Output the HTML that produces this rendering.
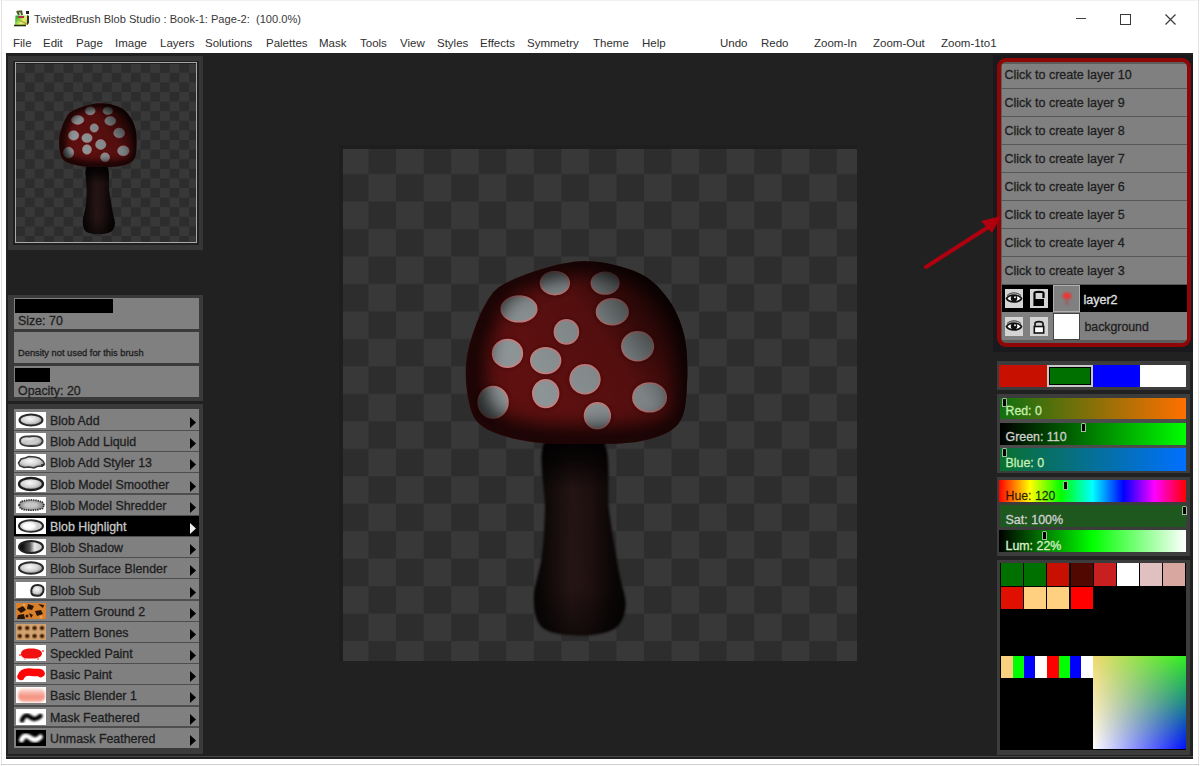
<!DOCTYPE html><html><head><meta charset="utf-8"><style>
html,body{margin:0;padding:0;}
body{width:1200px;height:766px;position:relative;overflow:hidden;background:#fff;font-family:"Liberation Sans",sans-serif;}
div,svg{position:absolute;}
</style></head><body>
<div style="left:1px;top:0px;width:1px;height:766px;background:#e2e2e2;"></div>
<div style="left:1198px;top:0px;width:1px;height:766px;background:#e2e2e2;"></div>
<div style="left:1px;top:764px;width:1198px;height:1px;background:#cfcfcf;"></div>
<svg style="left:10px;top:6px" width="24" height="24" viewBox="0 0 24 24">
<defs><linearGradient id="ti" x1="0" y1="0.3" x2="1" y2="0.9"><stop offset="0" stop-color="#20b020"/><stop offset="0.55" stop-color="#e8f070"/><stop offset="1" stop-color="#c8c040"/></linearGradient>
<filter color-interpolation-filters="sRGB" id="tib"><feGaussianBlur stdDeviation="0.55"/></filter></defs>
<g filter="url(#tib)">
<path d="M7 5 L9 9 M11 4.5 L12 9 M8.5 5.5 L12 5.5" stroke="#4a5a20" stroke-width="2"/>
<path d="M16 5 L19 5 L19 8 L16 8Z" fill="#222"/>
<path d="M5.5 9.5 L17 9.5 L18 19 L5 19Z" fill="url(#ti)"/>
<path d="M8 10 L14 10 L14 12 L8 12Z" fill="#b03050"/>
<path d="M17 9 L19 10 L19 17 L17 19Z" fill="#303828"/>
<path d="M4 19.5 L16 19.5" stroke="#1e3010" stroke-width="1.6"/>
<path d="M9 14 L17 18" stroke="#a0a040" stroke-width="1.2"/>
</g></svg>
<div style="left:34px;top:13.70px;font-size:11.1px;line-height:11.1px;color:#383838;white-space:nowrap;">TwistedBrush Blob Studio : Book-1: Page-2:&nbsp; (100.0%)</div>
<div style="left:1076px;top:18.2px;width:9.5px;height:1.2px;background:#444;"></div>
<div style="left:1120px;top:14px;width:8.5px;height:8.5px;background:transparent;border:1.2px solid #3a3a3a;"></div>
<svg style="left:1165px;top:13.5px" width="11" height="11" viewBox="0 0 11 11"><path d="M0.5 0.5L10.5 10.5M10.5 0.5L0.5 10.5" stroke="#3a3a3a" stroke-width="1.2"/></svg>
<div style="left:13px;top:37.87px;font-size:11.5px;line-height:11.5px;color:#303030;white-space:nowrap;">File</div>
<div style="left:43px;top:37.87px;font-size:11.5px;line-height:11.5px;color:#303030;white-space:nowrap;">Edit</div>
<div style="left:76px;top:37.87px;font-size:11.5px;line-height:11.5px;color:#303030;white-space:nowrap;">Page</div>
<div style="left:115px;top:37.87px;font-size:11.5px;line-height:11.5px;color:#303030;white-space:nowrap;">Image</div>
<div style="left:160px;top:37.87px;font-size:11.5px;line-height:11.5px;color:#303030;white-space:nowrap;">Layers</div>
<div style="left:205px;top:37.87px;font-size:11.5px;line-height:11.5px;color:#303030;white-space:nowrap;">Solutions</div>
<div style="left:266px;top:37.87px;font-size:11.5px;line-height:11.5px;color:#303030;white-space:nowrap;">Palettes</div>
<div style="left:319px;top:37.87px;font-size:11.5px;line-height:11.5px;color:#303030;white-space:nowrap;">Mask</div>
<div style="left:360px;top:37.87px;font-size:11.5px;line-height:11.5px;color:#303030;white-space:nowrap;">Tools</div>
<div style="left:400px;top:37.87px;font-size:11.5px;line-height:11.5px;color:#303030;white-space:nowrap;">View</div>
<div style="left:437px;top:37.87px;font-size:11.5px;line-height:11.5px;color:#303030;white-space:nowrap;">Styles</div>
<div style="left:480px;top:37.87px;font-size:11.5px;line-height:11.5px;color:#303030;white-space:nowrap;">Effects</div>
<div style="left:527px;top:37.87px;font-size:11.5px;line-height:11.5px;color:#303030;white-space:nowrap;">Symmetry</div>
<div style="left:593px;top:37.87px;font-size:11.5px;line-height:11.5px;color:#303030;white-space:nowrap;">Theme</div>
<div style="left:642px;top:37.87px;font-size:11.5px;line-height:11.5px;color:#303030;white-space:nowrap;">Help</div>
<div style="left:720px;top:37.87px;font-size:11.5px;line-height:11.5px;color:#303030;white-space:nowrap;">Undo</div>
<div style="left:761px;top:37.87px;font-size:11.5px;line-height:11.5px;color:#303030;white-space:nowrap;">Redo</div>
<div style="left:814px;top:37.87px;font-size:11.5px;line-height:11.5px;color:#303030;white-space:nowrap;">Zoom-In</div>
<div style="left:873px;top:37.87px;font-size:11.5px;line-height:11.5px;color:#303030;white-space:nowrap;">Zoom-Out</div>
<div style="left:941px;top:37.87px;font-size:11.5px;line-height:11.5px;color:#303030;white-space:nowrap;">Zoom-1to1</div>
<div style="left:6px;top:53px;width:1187px;height:706px;background:#212121;"></div>
<div style="left:6px;top:756px;width:1187px;height:1.2px;background:#474747;"></div>
<div style="left:0px;top:0px;width:1200px;height:1px;background:#f0f0f0;"></div>
<div style="left:8px;top:56px;width:195px;height:194px;background:#363636;"></div>
<div style="left:13px;top:61px;width:186px;height:184px;background:#202020;"></div>
<svg style="left:16px;top:63.5px" width="180" height="179" viewBox="0 0 514 512" preserveAspectRatio="none"><defs>
<pattern id="tchk" x="-2.05" y="-2.37" width="55.1" height="54.94" patternUnits="userSpaceOnUse">
<rect width="55.1" height="54.94" fill="#2d2d2d"/><rect width="27.55" height="27.47" fill="#383838"/><rect x="27.55" y="27.47" width="27.55" height="27.47" fill="#383838"/>
</pattern>
<radialGradient id="tshade" gradientUnits="userSpaceOnUse" cx="0" cy="0" r="1" gradientTransform="translate(535 362) scale(168 118)"><stop offset="0.00" stop-color="#000" stop-opacity="0.000"/><stop offset="0.05" stop-color="#000" stop-opacity="0.000"/><stop offset="0.10" stop-color="#000" stop-opacity="0.000"/><stop offset="0.15" stop-color="#000" stop-opacity="0.000"/><stop offset="0.20" stop-color="#000" stop-opacity="0.000"/><stop offset="0.25" stop-color="#000" stop-opacity="0.000"/><stop offset="0.30" stop-color="#000" stop-opacity="0.000"/><stop offset="0.35" stop-color="#000" stop-opacity="0.020"/><stop offset="0.40" stop-color="#000" stop-opacity="0.057"/><stop offset="0.45" stop-color="#000" stop-opacity="0.104"/><stop offset="0.50" stop-color="#000" stop-opacity="0.160"/><stop offset="0.55" stop-color="#000" stop-opacity="0.224"/><stop offset="0.60" stop-color="#000" stop-opacity="0.295"/><stop offset="0.65" stop-color="#000" stop-opacity="0.371"/><stop offset="0.70" stop-color="#000" stop-opacity="0.454"/><stop offset="0.75" stop-color="#000" stop-opacity="0.541"/><stop offset="0.80" stop-color="#000" stop-opacity="0.634"/><stop offset="0.85" stop-color="#000" stop-opacity="0.731"/><stop offset="0.90" stop-color="#000" stop-opacity="0.833"/><stop offset="0.95" stop-color="#000" stop-opacity="0.940"/><stop offset="1.00" stop-color="#000" stop-opacity="0.970"/></radialGradient>
<linearGradient id="tstem" gradientUnits="userSpaceOnUse" x1="533" y1="0" x2="625" y2="0"><stop offset="0" stop-color="#050303"/><stop offset="0.15" stop-color="#120a0a"/><stop offset="0.42" stop-color="#2a1717"/><stop offset="0.6" stop-color="#241313"/><stop offset="0.85" stop-color="#0e0707"/><stop offset="1" stop-color="#050303"/></linearGradient>
<linearGradient id="tstemv" gradientUnits="userSpaceOnUse" x1="0" y1="440" x2="0" y2="636"><stop offset="0" stop-color="#000" stop-opacity="0.95"/><stop offset="0.1" stop-color="#000" stop-opacity="0.75"/><stop offset="0.25" stop-color="#000" stop-opacity="0.15"/><stop offset="0.75" stop-color="#000" stop-opacity="0.1"/><stop offset="1" stop-color="#000" stop-opacity="0.55"/></linearGradient>
<clipPath id="tcapclip"><path d="M577.9 261.5 C598.5 260.1 620.5 265.6 635.3 271.6 C650.1 277.6 658.8 286.9 666.9 297.4 C675.0 307.9 680.6 320.4 684.0 334.8 C687.4 349.2 687.9 368.8 687.0 383.6 C686.1 398.4 686.1 414.2 678.4 423.8 C670.7 433.4 656.8 437.6 641.0 441.0 C625.2 444.4 602.8 443.9 583.6 443.9 C564.4 443.9 542.8 443.9 526.0 441.0 C509.2 438.1 492.6 433.4 483.0 426.7 C473.4 420.0 471.3 412.8 468.7 400.8 C466.1 388.8 464.4 371.2 467.3 354.9 C470.2 338.6 478.6 315.6 486.0 303.2 C493.4 290.8 496.5 287.1 511.8 280.2 C527.1 273.2 557.3 262.9 577.9 261.5Z"/></clipPath>
<filter color-interpolation-filters="sRGB" id="tblur" x="-10%" y="-10%" width="120%" height="120%"><feGaussianBlur stdDeviation="0.7"/></filter>
<filter color-interpolation-filters="sRGB" id="tedge" x="-20%" y="-20%" width="140%" height="140%"><feGaussianBlur stdDeviation="9"/></filter>
<linearGradient id="tdir" gradientUnits="userSpaceOnUse" x1="545" y1="395" x2="690" y2="290"><stop offset="0" stop-color="#000" stop-opacity="0"/><stop offset="0.45" stop-color="#000" stop-opacity="0.12"/><stop offset="0.75" stop-color="#000" stop-opacity="0.6"/><stop offset="1" stop-color="#000" stop-opacity="0.92"/></linearGradient>
<filter color-interpolation-filters="sRGB" id="tblur2" x="-10%" y="-10%" width="120%" height="120%"><feGaussianBlur stdDeviation="1.2"/></filter>
</defs><rect x="0" y="0" width="514" height="512" fill="url(#tchk)"/><g transform="translate(-343,-149)"><g filter="url(#tblur2)"><path d="M546.0 440.0 C536.5 451.7 545.7 490.7 545.0 510.0 C544.3 529.3 543.8 541.3 542.0 556.0 C540.2 570.7 533.8 586.0 534.0 598.0 C534.2 610.0 535.5 621.8 543.0 628.0 C550.5 634.2 567.2 635.3 579.0 635.5 C590.8 635.7 606.2 633.9 614.0 629.0 C621.8 624.1 624.7 615.5 625.5 606.0 C626.3 596.5 621.8 588.0 619.0 572.0 C616.2 556.0 611.8 532.0 609.0 510.0 C606.2 488.0 612.5 451.7 602.0 440.0 C591.5 428.3 555.5 428.3 546.0 440.0Z" fill="url(#tstem)"/><path d="M546.0 440.0 C536.5 451.7 545.7 490.7 545.0 510.0 C544.3 529.3 543.8 541.3 542.0 556.0 C540.2 570.7 533.8 586.0 534.0 598.0 C534.2 610.0 535.5 621.8 543.0 628.0 C550.5 634.2 567.2 635.3 579.0 635.5 C590.8 635.7 606.2 633.9 614.0 629.0 C621.8 624.1 624.7 615.5 625.5 606.0 C626.3 596.5 621.8 588.0 619.0 572.0 C616.2 556.0 611.8 532.0 609.0 510.0 C606.2 488.0 612.5 451.7 602.0 440.0 C591.5 428.3 555.5 428.3 546.0 440.0Z" fill="url(#tstemv)"/></g><g filter="url(#tblur)"><path d="M577.9 261.5 C598.5 260.1 620.5 265.6 635.3 271.6 C650.1 277.6 658.8 286.9 666.9 297.4 C675.0 307.9 680.6 320.4 684.0 334.8 C687.4 349.2 687.9 368.8 687.0 383.6 C686.1 398.4 686.1 414.2 678.4 423.8 C670.7 433.4 656.8 437.6 641.0 441.0 C625.2 444.4 602.8 443.9 583.6 443.9 C564.4 443.9 542.8 443.9 526.0 441.0 C509.2 438.1 492.6 433.4 483.0 426.7 C473.4 420.0 471.3 412.8 468.7 400.8 C466.1 388.8 464.4 371.2 467.3 354.9 C470.2 338.6 478.6 315.6 486.0 303.2 C493.4 290.8 496.5 287.1 511.8 280.2 C527.1 273.2 557.3 262.9 577.9 261.5Z" fill="#5e1010"/><g clip-path="url(#tcapclip)"><ellipse cx="554.9" cy="283.1" rx="16.9" ry="14.0" fill="#4a0a0a" opacity="0.6" filter="url(#tblur2)"/><ellipse cx="605.1" cy="283.1" rx="16.3" ry="13.4" fill="#4a0a0a" opacity="0.6" filter="url(#tblur2)"/><ellipse cx="519" cy="308.9" rx="20.3" ry="15.4" fill="#4a0a0a" opacity="0.6" filter="url(#tblur2)"/><ellipse cx="612.3" cy="311.8" rx="18.3" ry="15.4" fill="#4a0a0a" opacity="0.6" filter="url(#tblur2)"/><ellipse cx="566.4" cy="331.9" rx="14.5" ry="14.5" fill="#4a0a0a" opacity="0.6" filter="url(#tblur2)"/><ellipse cx="637.6" cy="346.3" rx="18.3" ry="16.9" fill="#4a0a0a" opacity="0.6" filter="url(#tblur2)"/><ellipse cx="507.5" cy="353.4" rx="17.4" ry="16.3" fill="#4a0a0a" opacity="0.6" filter="url(#tblur2)"/><ellipse cx="545.7" cy="360.6" rx="17.4" ry="15.4" fill="#4a0a0a" opacity="0.6" filter="url(#tblur2)"/><ellipse cx="585" cy="379.3" rx="17.4" ry="16.9" fill="#4a0a0a" opacity="0.6" filter="url(#tblur2)"/><ellipse cx="545.7" cy="393.6" rx="15.4" ry="16.3" fill="#4a0a0a" opacity="0.6" filter="url(#tblur2)"/><ellipse cx="493.1" cy="402.3" rx="17.4" ry="18.3" fill="#4a0a0a" opacity="0.6" filter="url(#tblur2)"/><ellipse cx="649.6" cy="397.4" rx="19.2" ry="16.9" fill="#4a0a0a" opacity="0.6" filter="url(#tblur2)"/><ellipse cx="597.4" cy="415.8" rx="15.4" ry="15.4" fill="#4a0a0a" opacity="0.6" filter="url(#tblur2)"/><ellipse cx="554.9" cy="283.1" rx="14.4" ry="11.5" fill="#8d9496" stroke="#c98080" stroke-width="1.6"/><ellipse cx="605.1" cy="283.1" rx="13.8" ry="10.9" fill="#8d9496" stroke="#c98080" stroke-width="1.6"/><ellipse cx="519" cy="308.9" rx="17.8" ry="12.9" fill="#8d9496" stroke="#c98080" stroke-width="1.6"/><ellipse cx="612.3" cy="311.8" rx="15.8" ry="12.9" fill="#8d9496" stroke="#c98080" stroke-width="1.6"/><ellipse cx="566.4" cy="331.9" rx="12" ry="12" fill="#8d9496" stroke="#c98080" stroke-width="1.6"/><ellipse cx="637.6" cy="346.3" rx="15.8" ry="14.4" fill="#8d9496" stroke="#c98080" stroke-width="1.6"/><ellipse cx="507.5" cy="353.4" rx="14.9" ry="13.8" fill="#8d9496" stroke="#c98080" stroke-width="1.6"/><ellipse cx="545.7" cy="360.6" rx="14.9" ry="12.9" fill="#8d9496" stroke="#c98080" stroke-width="1.6"/><ellipse cx="585" cy="379.3" rx="14.9" ry="14.4" fill="#8d9496" stroke="#c98080" stroke-width="1.6"/><ellipse cx="545.7" cy="393.6" rx="12.9" ry="13.8" fill="#8d9496" stroke="#c98080" stroke-width="1.6"/><ellipse cx="493.1" cy="402.3" rx="14.9" ry="15.8" fill="#8d9496" stroke="#c98080" stroke-width="1.6"/><ellipse cx="649.6" cy="397.4" rx="16.7" ry="14.4" fill="#8d9496" stroke="#c98080" stroke-width="1.6"/><ellipse cx="597.4" cy="415.8" rx="12.9" ry="12.9" fill="#8d9496" stroke="#c98080" stroke-width="1.6"/><path d="M577.9 261.5 C598.5 260.1 620.5 265.6 635.3 271.6 C650.1 277.6 658.8 286.9 666.9 297.4 C675.0 307.9 680.6 320.4 684.0 334.8 C687.4 349.2 687.9 368.8 687.0 383.6 C686.1 398.4 686.1 414.2 678.4 423.8 C670.7 433.4 656.8 437.6 641.0 441.0 C625.2 444.4 602.8 443.9 583.6 443.9 C564.4 443.9 542.8 443.9 526.0 441.0 C509.2 438.1 492.6 433.4 483.0 426.7 C473.4 420.0 471.3 412.8 468.7 400.8 C466.1 388.8 464.4 371.2 467.3 354.9 C470.2 338.6 478.6 315.6 486.0 303.2 C493.4 290.8 496.5 287.1 511.8 280.2 C527.1 273.2 557.3 262.9 577.9 261.5Z" fill="none" stroke="#000" stroke-width="30" opacity="0.75" filter="url(#tedge)" transform="translate(5 -3)"/><rect x="440" y="240" width="280" height="230" fill="url(#tdir)"/></g></g></g></svg>
<div style="left:14.5px;top:62px;width:180.25px;height:178.75px;background:transparent;border:1.5px solid #a8a8a8;"></div>
<div style="left:8px;top:295px;width:195px;height:106px;background:#3a3a3a;"></div>
<div style="left:14px;top:298px;width:185px;height:31px;background:#808080;"></div>
<div style="left:15px;top:299px;width:98px;height:14px;background:#000;"></div>
<div style="left:18px;top:315.30px;font-size:12.4px;line-height:12.4px;color:#1e1e1e;white-space:nowrap;-webkit-text-stroke:0.3px currentColor;">Size: 70</div>
<div style="left:14px;top:332px;width:185px;height:31px;background:#808080;"></div>
<div style="left:18px;top:348.93px;font-size:9.3px;line-height:9.3px;color:#1e1e1e;white-space:nowrap;-webkit-text-stroke:0.3px currentColor;">Density not used for this brush</div>
<div style="left:14px;top:366px;width:185px;height:31px;background:#808080;"></div>
<div style="left:15px;top:368px;width:35px;height:14px;background:#000;"></div>
<div style="left:18px;top:384.60px;font-size:12.4px;line-height:12.4px;color:#1e1e1e;white-space:nowrap;-webkit-text-stroke:0.3px currentColor;">Opacity: 20</div>
<div style="left:8px;top:404px;width:195px;height:350px;background:#3a3a3a;"></div>
<div style="left:14px;top:409px;width:185px;height:22px;background:#808080;"></div>
<div style="left:16px;top:412px;width:30px;height:16px;background:#fff;"></div>
<svg style="left:16px;top:412px" width="30" height="16" viewBox="0 0 30 16"><defs><radialGradient id="g0" cx="0.45" cy="0.4" r="0.6"><stop offset="0" stop-color="#fafafa"/><stop offset="0.6" stop-color="#d0d0d0"/><stop offset="1" stop-color="#8a8a8a"/></radialGradient><filter color-interpolation-filters="sRGB" id="f0" x="-20%" y="-30%" width="140%" height="160%"><feGaussianBlur stdDeviation="0.45"/></filter><filter color-interpolation-filters="sRGB" id="h0" x="-20%" y="-30%" width="140%" height="160%"><feGaussianBlur stdDeviation="1"/></filter></defs><ellipse cx="15" cy="8" rx="11.5" ry="5.6" fill="url(#g0)" stroke="#2a2a2a" stroke-width="2" filter="url(#f0)"/></svg>
<div style="left:50px;top:414.90px;font-size:12.4px;line-height:12.4px;color:#1e1e1e;white-space:nowrap;-webkit-text-stroke:0.3px currentColor;">Blob Add</div>
<svg style="left:190px;top:417px" width="6" height="11" viewBox="0 0 6 11"><path d="M0 0L6 5.5L0 11Z" fill="#000"/></svg>
<div style="left:14px;top:430px;width:185px;height:22px;background:#808080;"></div>
<div style="left:16px;top:433px;width:30px;height:16px;background:#fff;"></div>
<svg style="left:16px;top:433px" width="30" height="16" viewBox="0 0 30 16"><defs><radialGradient id="g1" cx="0.45" cy="0.4" r="0.6"><stop offset="0" stop-color="#fafafa"/><stop offset="0.6" stop-color="#d0d0d0"/><stop offset="1" stop-color="#8a8a8a"/></radialGradient><filter color-interpolation-filters="sRGB" id="f1" x="-20%" y="-30%" width="140%" height="160%"><feGaussianBlur stdDeviation="0.45"/></filter><filter color-interpolation-filters="sRGB" id="h1" x="-20%" y="-30%" width="140%" height="160%"><feGaussianBlur stdDeviation="1"/></filter></defs><path d="M4 8.5 C3.5 4.5 8 3 13 3.5 C18 2.5 25 3 26.5 7 C27.5 11 23 13.5 16 13 C9 13.5 4.5 12.5 4 8.5Z" fill="url(#g1)" stroke="#3a3a3a" stroke-width="1.8" filter="url(#f1)"/><path d="M8 10 C12 6 16 11 22 6" stroke="#b8b8b8" stroke-width="2" fill="none" filter="url(#h1)"/></svg>
<div style="left:50px;top:435.90px;font-size:12.4px;line-height:12.4px;color:#1e1e1e;white-space:nowrap;-webkit-text-stroke:0.3px currentColor;">Blob Add Liquid</div>
<svg style="left:190px;top:438px" width="6" height="11" viewBox="0 0 6 11"><path d="M0 0L6 5.5L0 11Z" fill="#000"/></svg>
<div style="left:14px;top:451px;width:185px;height:22px;background:#808080;"></div>
<div style="left:16px;top:454px;width:30px;height:16px;background:#fff;"></div>
<svg style="left:16px;top:454px" width="30" height="16" viewBox="0 0 30 16"><defs><radialGradient id="g2" cx="0.45" cy="0.4" r="0.6"><stop offset="0" stop-color="#fafafa"/><stop offset="0.6" stop-color="#d0d0d0"/><stop offset="1" stop-color="#8a8a8a"/></radialGradient><filter color-interpolation-filters="sRGB" id="f2" x="-20%" y="-30%" width="140%" height="160%"><feGaussianBlur stdDeviation="0.45"/></filter><filter color-interpolation-filters="sRGB" id="h2" x="-20%" y="-30%" width="140%" height="160%"><feGaussianBlur stdDeviation="1"/></filter></defs><path d="M2.5 9 L5 5 L9 4 L13 2.5 L19 3 L23 4 L27 7 L28.5 10 L26 12 L21 12.5 L18 14 L13 13 L8 13.5 L4 12 Z" fill="url(#g2)" stroke="#3a3a3a" stroke-width="1.5" filter="url(#f2)"/><path d="M25 10 L29 11 L26 13Z" fill="#222"/></svg>
<div style="left:50px;top:456.90px;font-size:12.4px;line-height:12.4px;color:#1e1e1e;white-space:nowrap;-webkit-text-stroke:0.3px currentColor;">Blob Add Styler 13</div>
<svg style="left:190px;top:459px" width="6" height="11" viewBox="0 0 6 11"><path d="M0 0L6 5.5L0 11Z" fill="#000"/></svg>
<div style="left:14px;top:473px;width:185px;height:22px;background:#808080;"></div>
<div style="left:16px;top:476px;width:30px;height:16px;background:#fff;"></div>
<svg style="left:16px;top:476px" width="30" height="16" viewBox="0 0 30 16"><defs><radialGradient id="g3" cx="0.45" cy="0.4" r="0.6"><stop offset="0" stop-color="#fafafa"/><stop offset="0.6" stop-color="#d0d0d0"/><stop offset="1" stop-color="#8a8a8a"/></radialGradient><filter color-interpolation-filters="sRGB" id="f3" x="-20%" y="-30%" width="140%" height="160%"><feGaussianBlur stdDeviation="0.45"/></filter><filter color-interpolation-filters="sRGB" id="h3" x="-20%" y="-30%" width="140%" height="160%"><feGaussianBlur stdDeviation="1"/></filter></defs><ellipse cx="15" cy="8" rx="12" ry="6" fill="url(#g3)" stroke="#1e1e1e" stroke-width="2.3" filter="url(#f3)"/></svg>
<div style="left:50px;top:478.90px;font-size:12.4px;line-height:12.4px;color:#1e1e1e;white-space:nowrap;-webkit-text-stroke:0.3px currentColor;">Blob Model Smoother</div>
<svg style="left:190px;top:481px" width="6" height="11" viewBox="0 0 6 11"><path d="M0 0L6 5.5L0 11Z" fill="#000"/></svg>
<div style="left:14px;top:494px;width:185px;height:22px;background:#808080;"></div>
<div style="left:16px;top:497px;width:30px;height:16px;background:#fff;"></div>
<svg style="left:16px;top:497px" width="30" height="16" viewBox="0 0 30 16"><defs><radialGradient id="g4" cx="0.45" cy="0.4" r="0.6"><stop offset="0" stop-color="#fafafa"/><stop offset="0.6" stop-color="#d0d0d0"/><stop offset="1" stop-color="#8a8a8a"/></radialGradient><filter color-interpolation-filters="sRGB" id="f4" x="-20%" y="-30%" width="140%" height="160%"><feGaussianBlur stdDeviation="0.45"/></filter><filter color-interpolation-filters="sRGB" id="h4" x="-20%" y="-30%" width="140%" height="160%"><feGaussianBlur stdDeviation="1"/></filter></defs><path d="M3 8 L5 4.5 L10 3.5 L15 3 L21 3.5 L26 5 L28 8 L26.5 11.5 L21 12.8 L15 13.2 L9 12.8 L4.5 11.5Z" fill="#9a9a9a" stroke="#333" stroke-width="1.8" stroke-dasharray="1.5 0.8" filter="url(#f4)"/><ellipse cx="15" cy="8" rx="8" ry="3.5" fill="#c8c8c8" filter="url(#h4)"/></svg>
<div style="left:50px;top:499.90px;font-size:12.4px;line-height:12.4px;color:#1e1e1e;white-space:nowrap;-webkit-text-stroke:0.3px currentColor;">Blob Model Shredder</div>
<svg style="left:190px;top:502px" width="6" height="11" viewBox="0 0 6 11"><path d="M0 0L6 5.5L0 11Z" fill="#000"/></svg>
<div style="left:14px;top:515px;width:185px;height:22px;background:#000;"></div>
<div style="left:16px;top:518px;width:30px;height:16px;background:#fff;"></div>
<svg style="left:16px;top:518px" width="30" height="16" viewBox="0 0 30 16"><defs><radialGradient id="g5" cx="0.45" cy="0.4" r="0.6"><stop offset="0" stop-color="#fafafa"/><stop offset="0.6" stop-color="#d0d0d0"/><stop offset="1" stop-color="#8a8a8a"/></radialGradient><filter color-interpolation-filters="sRGB" id="f5" x="-20%" y="-30%" width="140%" height="160%"><feGaussianBlur stdDeviation="0.45"/></filter><filter color-interpolation-filters="sRGB" id="h5" x="-20%" y="-30%" width="140%" height="160%"><feGaussianBlur stdDeviation="1"/></filter></defs><ellipse cx="15" cy="8" rx="12" ry="5.8" fill="#cfcfcf" stroke="#262626" stroke-width="2" filter="url(#f5)"/><ellipse cx="13" cy="8" rx="7" ry="4" fill="#fff" filter="url(#h5)"/></svg>
<div style="left:50px;top:520.90px;font-size:12.4px;line-height:12.4px;color:#c8c8c8;white-space:nowrap;-webkit-text-stroke:0.3px currentColor;">Blob Highlight</div>
<svg style="left:190px;top:523px" width="6" height="11" viewBox="0 0 6 11"><path d="M0 0L6 5.5L0 11Z" fill="#eee"/></svg>
<div style="left:14px;top:536px;width:185px;height:22px;background:#808080;"></div>
<div style="left:16px;top:539px;width:30px;height:16px;background:#fff;"></div>
<svg style="left:16px;top:539px" width="30" height="16" viewBox="0 0 30 16"><defs><radialGradient id="g6" cx="0.45" cy="0.4" r="0.6"><stop offset="0" stop-color="#fafafa"/><stop offset="0.6" stop-color="#d0d0d0"/><stop offset="1" stop-color="#8a8a8a"/></radialGradient><filter color-interpolation-filters="sRGB" id="f6" x="-20%" y="-30%" width="140%" height="160%"><feGaussianBlur stdDeviation="0.45"/></filter><filter color-interpolation-filters="sRGB" id="h6" x="-20%" y="-30%" width="140%" height="160%"><feGaussianBlur stdDeviation="1"/></filter></defs><defs><linearGradient id="s6" x1="0" x2="1"><stop offset="0.15" stop-color="#111"/><stop offset="0.45" stop-color="#555"/><stop offset="0.65" stop-color="#e8e8e8"/><stop offset="1" stop-color="#bbb"/></linearGradient></defs><ellipse cx="15" cy="8" rx="12" ry="6" fill="url(#s6)" stroke="#222" stroke-width="2" filter="url(#f6)"/></svg>
<div style="left:50px;top:541.90px;font-size:12.4px;line-height:12.4px;color:#1e1e1e;white-space:nowrap;-webkit-text-stroke:0.3px currentColor;">Blob Shadow</div>
<svg style="left:190px;top:544px" width="6" height="11" viewBox="0 0 6 11"><path d="M0 0L6 5.5L0 11Z" fill="#000"/></svg>
<div style="left:14px;top:557px;width:185px;height:22px;background:#808080;"></div>
<div style="left:16px;top:560px;width:30px;height:16px;background:#fff;"></div>
<svg style="left:16px;top:560px" width="30" height="16" viewBox="0 0 30 16"><defs><radialGradient id="g7" cx="0.45" cy="0.4" r="0.6"><stop offset="0" stop-color="#fafafa"/><stop offset="0.6" stop-color="#d0d0d0"/><stop offset="1" stop-color="#8a8a8a"/></radialGradient><filter color-interpolation-filters="sRGB" id="f7" x="-20%" y="-30%" width="140%" height="160%"><feGaussianBlur stdDeviation="0.45"/></filter><filter color-interpolation-filters="sRGB" id="h7" x="-20%" y="-30%" width="140%" height="160%"><feGaussianBlur stdDeviation="1"/></filter></defs><ellipse cx="15" cy="8" rx="12" ry="5.8" fill="url(#g7)" stroke="#2a2a2a" stroke-width="2" filter="url(#f7)"/></svg>
<div style="left:50px;top:562.90px;font-size:12.4px;line-height:12.4px;color:#1e1e1e;white-space:nowrap;-webkit-text-stroke:0.3px currentColor;">Blob Surface Blender</div>
<svg style="left:190px;top:565px" width="6" height="11" viewBox="0 0 6 11"><path d="M0 0L6 5.5L0 11Z" fill="#000"/></svg>
<div style="left:14px;top:579px;width:185px;height:22px;background:#808080;"></div>
<div style="left:16px;top:582px;width:30px;height:16px;background:#fff;"></div>
<svg style="left:16px;top:582px" width="30" height="16" viewBox="0 0 30 16"><defs><radialGradient id="g8" cx="0.45" cy="0.4" r="0.6"><stop offset="0" stop-color="#fafafa"/><stop offset="0.6" stop-color="#d0d0d0"/><stop offset="1" stop-color="#8a8a8a"/></radialGradient><filter color-interpolation-filters="sRGB" id="f8" x="-20%" y="-30%" width="140%" height="160%"><feGaussianBlur stdDeviation="0.45"/></filter><filter color-interpolation-filters="sRGB" id="h8" x="-20%" y="-30%" width="140%" height="160%"><feGaussianBlur stdDeviation="1"/></filter></defs><path d="M17 4.5 C19 2.5 25 2.5 27 5 C28.5 8 27 12 24 13.5 C20 14 16 13.5 15.5 11 C15 8 15.5 6 17 4.5Z" fill="url(#g8)" stroke="#262626" stroke-width="2" filter="url(#f8)"/></svg>
<div style="left:50px;top:584.90px;font-size:12.4px;line-height:12.4px;color:#1e1e1e;white-space:nowrap;-webkit-text-stroke:0.3px currentColor;">Blob Sub</div>
<svg style="left:190px;top:587px" width="6" height="11" viewBox="0 0 6 11"><path d="M0 0L6 5.5L0 11Z" fill="#000"/></svg>
<div style="left:14px;top:600px;width:185px;height:22px;background:#808080;"></div>
<div style="left:16px;top:603px;width:30px;height:16px;background:#fff;"></div>
<svg style="left:16px;top:603px" width="30" height="16" viewBox="0 0 30 16"><rect width="30" height="16" fill="#d8802c"/><g fill="#281405"><path d="M1 6 L7 3 L10 7 L5 10Z"/><path d="M12 1 L18 3 L16 7 L11 6Z"/><path d="M19 8 L25 7 L27 11 L21 13Z"/><path d="M2 12 L8 11 L9 16 L1 16Z"/><path d="M13 10 L17 12 L15 15Z"/><path d="M22 1 L28 2 L27 5Z"/><circle cx="11" cy="13" r="1.5"/></g><g fill="#f0a050"><circle cx="8" cy="2" r="1.5"/><circle cx="25" cy="14" r="1.5"/></g></svg>
<div style="left:50px;top:605.90px;font-size:12.4px;line-height:12.4px;color:#1e1e1e;white-space:nowrap;-webkit-text-stroke:0.3px currentColor;">Pattern Ground 2</div>
<svg style="left:190px;top:608px" width="6" height="11" viewBox="0 0 6 11"><path d="M0 0L6 5.5L0 11Z" fill="#000"/></svg>
<div style="left:14px;top:621px;width:185px;height:22px;background:#808080;"></div>
<div style="left:16px;top:624px;width:30px;height:16px;background:#fff;"></div>
<svg style="left:16px;top:624px" width="30" height="16" viewBox="0 0 30 16"><rect width="30" height="16" fill="#d0a070"/><circle cx="3.8" cy="4" r="2.6" fill="#8a5a2a"/><circle cx="3.8" cy="4" r="1.3" fill="#2a1808"/><circle cx="11.2" cy="4" r="2.6" fill="#8a5a2a"/><circle cx="11.2" cy="4" r="1.3" fill="#2a1808"/><circle cx="18.6" cy="4" r="2.6" fill="#8a5a2a"/><circle cx="18.6" cy="4" r="1.3" fill="#2a1808"/><circle cx="26.000000000000004" cy="4" r="2.6" fill="#8a5a2a"/><circle cx="26.000000000000004" cy="4" r="1.3" fill="#2a1808"/><circle cx="3.8" cy="12" r="2.6" fill="#8a5a2a"/><circle cx="3.8" cy="12" r="1.3" fill="#2a1808"/><circle cx="11.2" cy="12" r="2.6" fill="#8a5a2a"/><circle cx="11.2" cy="12" r="1.3" fill="#2a1808"/><circle cx="18.6" cy="12" r="2.6" fill="#8a5a2a"/><circle cx="18.6" cy="12" r="1.3" fill="#2a1808"/><circle cx="26.000000000000004" cy="12" r="2.6" fill="#8a5a2a"/><circle cx="26.000000000000004" cy="12" r="1.3" fill="#2a1808"/></svg>
<div style="left:50px;top:626.90px;font-size:12.4px;line-height:12.4px;color:#1e1e1e;white-space:nowrap;-webkit-text-stroke:0.3px currentColor;">Pattern Bones</div>
<svg style="left:190px;top:629px" width="6" height="11" viewBox="0 0 6 11"><path d="M0 0L6 5.5L0 11Z" fill="#000"/></svg>
<div style="left:14px;top:642px;width:185px;height:22px;background:#808080;"></div>
<div style="left:16px;top:645px;width:30px;height:16px;background:#fff;"></div>
<svg style="left:16px;top:645px" width="30" height="16" viewBox="0 0 30 16"><defs><filter color-interpolation-filters="sRGB" id="sp11" x="-30%" y="-50%" width="160%" height="200%"><feGaussianBlur stdDeviation="0.6"/></filter></defs><g filter="url(#sp11)"><path d="M5 9 C5 5 9 3.5 15 3.5 C21 3.5 26 5 26 8.5 C26 12 21 14 15 13.5 C9 14 5 12.5 5 9Z" fill="#f01010"/><circle cx="4" cy="10" r="1" fill="#f44"/><circle cx="27" cy="6" r="1" fill="#f44"/><circle cx="22" cy="14" r="0.9" fill="#f66"/><circle cx="9" cy="14" r="0.8" fill="#f66"/></g></svg>
<div style="left:50px;top:647.90px;font-size:12.4px;line-height:12.4px;color:#1e1e1e;white-space:nowrap;-webkit-text-stroke:0.3px currentColor;">Speckled Paint</div>
<svg style="left:190px;top:650px" width="6" height="11" viewBox="0 0 6 11"><path d="M0 0L6 5.5L0 11Z" fill="#000"/></svg>
<div style="left:14px;top:663px;width:185px;height:22px;background:#808080;"></div>
<div style="left:16px;top:666px;width:30px;height:16px;background:#fff;"></div>
<svg style="left:16px;top:666px" width="30" height="16" viewBox="0 0 30 16"><path d="M5 10.5 C7 5 13 5.5 18 6.5 C22 7 24 5.5 25 7.5" stroke="#ff0505" stroke-width="7.5" fill="none" stroke-linecap="round"/></svg>
<div style="left:50px;top:668.90px;font-size:12.4px;line-height:12.4px;color:#1e1e1e;white-space:nowrap;-webkit-text-stroke:0.3px currentColor;">Basic Paint</div>
<svg style="left:190px;top:671px" width="6" height="11" viewBox="0 0 6 11"><path d="M0 0L6 5.5L0 11Z" fill="#000"/></svg>
<div style="left:14px;top:684px;width:185px;height:22px;background:#808080;"></div>
<div style="left:16px;top:687px;width:30px;height:16px;background:#fff;"></div>
<svg style="left:16px;top:687px" width="30" height="16" viewBox="0 0 30 16"><defs><filter color-interpolation-filters="sRGB" id="bb13" x="-30%" y="-50%" width="160%" height="200%"><feGaussianBlur stdDeviation="1.3"/></filter><linearGradient id="bg13" x1="0" y1="0" x2="0" y2="1"><stop offset="0" stop-color="#fbe0d8"/><stop offset="0.6" stop-color="#f49080"/><stop offset="1" stop-color="#f8b0a0"/></linearGradient></defs><rect x="2" y="1.5" width="27" height="13.5" rx="5" fill="url(#bg13)" filter="url(#bb13)"/></svg>
<div style="left:50px;top:689.90px;font-size:12.4px;line-height:12.4px;color:#1e1e1e;white-space:nowrap;-webkit-text-stroke:0.3px currentColor;">Basic Blender 1</div>
<svg style="left:190px;top:692px" width="6" height="11" viewBox="0 0 6 11"><path d="M0 0L6 5.5L0 11Z" fill="#000"/></svg>
<div style="left:14px;top:706px;width:185px;height:22px;background:#808080;"></div>
<div style="left:16px;top:709px;width:30px;height:16px;background:#fff;"></div>
<svg style="left:16px;top:709px" width="30" height="16" viewBox="0 0 30 16"><defs><filter color-interpolation-filters="sRGB" id="mf14" x="-30%" y="-50%" width="160%" height="200%"><feGaussianBlur stdDeviation="0.8"/></filter></defs><path d="M6 11.5 C8 6 11 5.5 14 8 C17 10.5 20 11 24.5 7" stroke="#000" stroke-width="4.5" fill="none" stroke-linecap="round" filter="url(#mf14)"/></svg>
<div style="left:50px;top:711.90px;font-size:12.4px;line-height:12.4px;color:#1e1e1e;white-space:nowrap;-webkit-text-stroke:0.3px currentColor;">Mask Feathered</div>
<svg style="left:190px;top:714px" width="6" height="11" viewBox="0 0 6 11"><path d="M0 0L6 5.5L0 11Z" fill="#000"/></svg>
<div style="left:14px;top:727px;width:185px;height:22px;background:#808080;"></div>
<div style="left:16px;top:730px;width:30px;height:16px;background:#fff;"></div>
<svg style="left:16px;top:730px" width="30" height="16" viewBox="0 0 30 16"><rect width="30" height="16" fill="#000"/><defs><filter color-interpolation-filters="sRGB" id="mf15" x="-30%" y="-50%" width="160%" height="200%"><feGaussianBlur stdDeviation="0.8"/></filter></defs><path d="M5.5 10 C7.5 5 11 5 14.5 8 C18 11 21 10.5 24.5 7" stroke="#fff" stroke-width="5" fill="none" stroke-linecap="round" filter="url(#mf15)"/></svg>
<div style="left:50px;top:732.90px;font-size:12.4px;line-height:12.4px;color:#1e1e1e;white-space:nowrap;-webkit-text-stroke:0.3px currentColor;">Unmask Feathered</div>
<svg style="left:190px;top:735px" width="6" height="11" viewBox="0 0 6 11"><path d="M0 0L6 5.5L0 11Z" fill="#000"/></svg>
<div style="left:14px;top:429.79999999999995px;width:185px;height:1.3px;background:#4e4e4e;"></div>
<div style="left:14px;top:450.98999999999995px;width:185px;height:1.3px;background:#4e4e4e;"></div>
<div style="left:14px;top:472.17999999999995px;width:185px;height:1.3px;background:#4e4e4e;"></div>
<div style="left:14px;top:493.36999999999995px;width:185px;height:1.3px;background:#4e4e4e;"></div>
<div style="left:14px;top:514.56px;width:185px;height:1.3px;background:#4e4e4e;"></div>
<div style="left:14px;top:535.75px;width:185px;height:1.3px;background:#4e4e4e;"></div>
<div style="left:14px;top:556.9399999999999px;width:185px;height:1.3px;background:#4e4e4e;"></div>
<div style="left:14px;top:578.13px;width:185px;height:1.3px;background:#4e4e4e;"></div>
<div style="left:14px;top:599.3199999999999px;width:185px;height:1.3px;background:#4e4e4e;"></div>
<div style="left:14px;top:620.51px;width:185px;height:1.3px;background:#4e4e4e;"></div>
<div style="left:14px;top:641.6999999999999px;width:185px;height:1.3px;background:#4e4e4e;"></div>
<div style="left:14px;top:662.89px;width:185px;height:1.3px;background:#4e4e4e;"></div>
<div style="left:14px;top:684.08px;width:185px;height:1.3px;background:#4e4e4e;"></div>
<div style="left:14px;top:705.27px;width:185px;height:1.3px;background:#4e4e4e;"></div>
<div style="left:14px;top:726.4599999999999px;width:185px;height:1.3px;background:#4e4e4e;"></div>
<div style="left:8px;top:748px;width:195px;height:6px;background:#3a3a3a;"></div>
<div style="left:339px;top:145px;width:4px;height:516px;background:#1e1e1e;"></div>
<div style="left:339px;top:145px;width:518px;height:4px;background:#1e1e1e;"></div>
<svg style="left:343px;top:149px" width="514" height="512" viewBox="0 0 514 512"><defs>
<pattern id="cchk" x="-2.05" y="-2.37" width="55.1" height="54.94" patternUnits="userSpaceOnUse">
<rect width="55.1" height="54.94" fill="#2d2d2d"/><rect width="27.55" height="27.47" fill="#383838"/><rect x="27.55" y="27.47" width="27.55" height="27.47" fill="#383838"/>
</pattern>
<radialGradient id="cshade" gradientUnits="userSpaceOnUse" cx="0" cy="0" r="1" gradientTransform="translate(535 362) scale(168 118)"><stop offset="0.00" stop-color="#000" stop-opacity="0.000"/><stop offset="0.05" stop-color="#000" stop-opacity="0.000"/><stop offset="0.10" stop-color="#000" stop-opacity="0.000"/><stop offset="0.15" stop-color="#000" stop-opacity="0.000"/><stop offset="0.20" stop-color="#000" stop-opacity="0.000"/><stop offset="0.25" stop-color="#000" stop-opacity="0.000"/><stop offset="0.30" stop-color="#000" stop-opacity="0.000"/><stop offset="0.35" stop-color="#000" stop-opacity="0.020"/><stop offset="0.40" stop-color="#000" stop-opacity="0.057"/><stop offset="0.45" stop-color="#000" stop-opacity="0.104"/><stop offset="0.50" stop-color="#000" stop-opacity="0.160"/><stop offset="0.55" stop-color="#000" stop-opacity="0.224"/><stop offset="0.60" stop-color="#000" stop-opacity="0.295"/><stop offset="0.65" stop-color="#000" stop-opacity="0.371"/><stop offset="0.70" stop-color="#000" stop-opacity="0.454"/><stop offset="0.75" stop-color="#000" stop-opacity="0.541"/><stop offset="0.80" stop-color="#000" stop-opacity="0.634"/><stop offset="0.85" stop-color="#000" stop-opacity="0.731"/><stop offset="0.90" stop-color="#000" stop-opacity="0.833"/><stop offset="0.95" stop-color="#000" stop-opacity="0.940"/><stop offset="1.00" stop-color="#000" stop-opacity="0.970"/></radialGradient>
<linearGradient id="cstem" gradientUnits="userSpaceOnUse" x1="533" y1="0" x2="625" y2="0"><stop offset="0" stop-color="#050303"/><stop offset="0.15" stop-color="#120a0a"/><stop offset="0.42" stop-color="#2a1717"/><stop offset="0.6" stop-color="#241313"/><stop offset="0.85" stop-color="#0e0707"/><stop offset="1" stop-color="#050303"/></linearGradient>
<linearGradient id="cstemv" gradientUnits="userSpaceOnUse" x1="0" y1="440" x2="0" y2="636"><stop offset="0" stop-color="#000" stop-opacity="0.95"/><stop offset="0.1" stop-color="#000" stop-opacity="0.75"/><stop offset="0.25" stop-color="#000" stop-opacity="0.15"/><stop offset="0.75" stop-color="#000" stop-opacity="0.1"/><stop offset="1" stop-color="#000" stop-opacity="0.55"/></linearGradient>
<clipPath id="ccapclip"><path d="M577.9 261.5 C598.5 260.1 620.5 265.6 635.3 271.6 C650.1 277.6 658.8 286.9 666.9 297.4 C675.0 307.9 680.6 320.4 684.0 334.8 C687.4 349.2 687.9 368.8 687.0 383.6 C686.1 398.4 686.1 414.2 678.4 423.8 C670.7 433.4 656.8 437.6 641.0 441.0 C625.2 444.4 602.8 443.9 583.6 443.9 C564.4 443.9 542.8 443.9 526.0 441.0 C509.2 438.1 492.6 433.4 483.0 426.7 C473.4 420.0 471.3 412.8 468.7 400.8 C466.1 388.8 464.4 371.2 467.3 354.9 C470.2 338.6 478.6 315.6 486.0 303.2 C493.4 290.8 496.5 287.1 511.8 280.2 C527.1 273.2 557.3 262.9 577.9 261.5Z"/></clipPath>
<filter color-interpolation-filters="sRGB" id="cblur" x="-10%" y="-10%" width="120%" height="120%"><feGaussianBlur stdDeviation="0.7"/></filter>
<filter color-interpolation-filters="sRGB" id="cedge" x="-20%" y="-20%" width="140%" height="140%"><feGaussianBlur stdDeviation="9"/></filter>
<linearGradient id="cdir" gradientUnits="userSpaceOnUse" x1="545" y1="395" x2="690" y2="290"><stop offset="0" stop-color="#000" stop-opacity="0"/><stop offset="0.45" stop-color="#000" stop-opacity="0.12"/><stop offset="0.75" stop-color="#000" stop-opacity="0.6"/><stop offset="1" stop-color="#000" stop-opacity="0.92"/></linearGradient>
<filter color-interpolation-filters="sRGB" id="cblur2" x="-10%" y="-10%" width="120%" height="120%"><feGaussianBlur stdDeviation="1.2"/></filter>
</defs><rect x="0" y="0" width="514" height="512" fill="url(#cchk)"/><g transform="translate(-343,-149)"><g filter="url(#cblur2)"><path d="M546.0 440.0 C536.5 451.7 545.7 490.7 545.0 510.0 C544.3 529.3 543.8 541.3 542.0 556.0 C540.2 570.7 533.8 586.0 534.0 598.0 C534.2 610.0 535.5 621.8 543.0 628.0 C550.5 634.2 567.2 635.3 579.0 635.5 C590.8 635.7 606.2 633.9 614.0 629.0 C621.8 624.1 624.7 615.5 625.5 606.0 C626.3 596.5 621.8 588.0 619.0 572.0 C616.2 556.0 611.8 532.0 609.0 510.0 C606.2 488.0 612.5 451.7 602.0 440.0 C591.5 428.3 555.5 428.3 546.0 440.0Z" fill="url(#cstem)"/><path d="M546.0 440.0 C536.5 451.7 545.7 490.7 545.0 510.0 C544.3 529.3 543.8 541.3 542.0 556.0 C540.2 570.7 533.8 586.0 534.0 598.0 C534.2 610.0 535.5 621.8 543.0 628.0 C550.5 634.2 567.2 635.3 579.0 635.5 C590.8 635.7 606.2 633.9 614.0 629.0 C621.8 624.1 624.7 615.5 625.5 606.0 C626.3 596.5 621.8 588.0 619.0 572.0 C616.2 556.0 611.8 532.0 609.0 510.0 C606.2 488.0 612.5 451.7 602.0 440.0 C591.5 428.3 555.5 428.3 546.0 440.0Z" fill="url(#cstemv)"/></g><g filter="url(#cblur)"><path d="M577.9 261.5 C598.5 260.1 620.5 265.6 635.3 271.6 C650.1 277.6 658.8 286.9 666.9 297.4 C675.0 307.9 680.6 320.4 684.0 334.8 C687.4 349.2 687.9 368.8 687.0 383.6 C686.1 398.4 686.1 414.2 678.4 423.8 C670.7 433.4 656.8 437.6 641.0 441.0 C625.2 444.4 602.8 443.9 583.6 443.9 C564.4 443.9 542.8 443.9 526.0 441.0 C509.2 438.1 492.6 433.4 483.0 426.7 C473.4 420.0 471.3 412.8 468.7 400.8 C466.1 388.8 464.4 371.2 467.3 354.9 C470.2 338.6 478.6 315.6 486.0 303.2 C493.4 290.8 496.5 287.1 511.8 280.2 C527.1 273.2 557.3 262.9 577.9 261.5Z" fill="#5e1010"/><g clip-path="url(#ccapclip)"><ellipse cx="554.9" cy="283.1" rx="16.9" ry="14.0" fill="#4a0a0a" opacity="0.6" filter="url(#cblur2)"/><ellipse cx="605.1" cy="283.1" rx="16.3" ry="13.4" fill="#4a0a0a" opacity="0.6" filter="url(#cblur2)"/><ellipse cx="519" cy="308.9" rx="20.3" ry="15.4" fill="#4a0a0a" opacity="0.6" filter="url(#cblur2)"/><ellipse cx="612.3" cy="311.8" rx="18.3" ry="15.4" fill="#4a0a0a" opacity="0.6" filter="url(#cblur2)"/><ellipse cx="566.4" cy="331.9" rx="14.5" ry="14.5" fill="#4a0a0a" opacity="0.6" filter="url(#cblur2)"/><ellipse cx="637.6" cy="346.3" rx="18.3" ry="16.9" fill="#4a0a0a" opacity="0.6" filter="url(#cblur2)"/><ellipse cx="507.5" cy="353.4" rx="17.4" ry="16.3" fill="#4a0a0a" opacity="0.6" filter="url(#cblur2)"/><ellipse cx="545.7" cy="360.6" rx="17.4" ry="15.4" fill="#4a0a0a" opacity="0.6" filter="url(#cblur2)"/><ellipse cx="585" cy="379.3" rx="17.4" ry="16.9" fill="#4a0a0a" opacity="0.6" filter="url(#cblur2)"/><ellipse cx="545.7" cy="393.6" rx="15.4" ry="16.3" fill="#4a0a0a" opacity="0.6" filter="url(#cblur2)"/><ellipse cx="493.1" cy="402.3" rx="17.4" ry="18.3" fill="#4a0a0a" opacity="0.6" filter="url(#cblur2)"/><ellipse cx="649.6" cy="397.4" rx="19.2" ry="16.9" fill="#4a0a0a" opacity="0.6" filter="url(#cblur2)"/><ellipse cx="597.4" cy="415.8" rx="15.4" ry="15.4" fill="#4a0a0a" opacity="0.6" filter="url(#cblur2)"/><ellipse cx="554.9" cy="283.1" rx="14.4" ry="11.5" fill="#8d9496" stroke="#c98080" stroke-width="1.6"/><ellipse cx="605.1" cy="283.1" rx="13.8" ry="10.9" fill="#8d9496" stroke="#c98080" stroke-width="1.6"/><ellipse cx="519" cy="308.9" rx="17.8" ry="12.9" fill="#8d9496" stroke="#c98080" stroke-width="1.6"/><ellipse cx="612.3" cy="311.8" rx="15.8" ry="12.9" fill="#8d9496" stroke="#c98080" stroke-width="1.6"/><ellipse cx="566.4" cy="331.9" rx="12" ry="12" fill="#8d9496" stroke="#c98080" stroke-width="1.6"/><ellipse cx="637.6" cy="346.3" rx="15.8" ry="14.4" fill="#8d9496" stroke="#c98080" stroke-width="1.6"/><ellipse cx="507.5" cy="353.4" rx="14.9" ry="13.8" fill="#8d9496" stroke="#c98080" stroke-width="1.6"/><ellipse cx="545.7" cy="360.6" rx="14.9" ry="12.9" fill="#8d9496" stroke="#c98080" stroke-width="1.6"/><ellipse cx="585" cy="379.3" rx="14.9" ry="14.4" fill="#8d9496" stroke="#c98080" stroke-width="1.6"/><ellipse cx="545.7" cy="393.6" rx="12.9" ry="13.8" fill="#8d9496" stroke="#c98080" stroke-width="1.6"/><ellipse cx="493.1" cy="402.3" rx="14.9" ry="15.8" fill="#8d9496" stroke="#c98080" stroke-width="1.6"/><ellipse cx="649.6" cy="397.4" rx="16.7" ry="14.4" fill="#8d9496" stroke="#c98080" stroke-width="1.6"/><ellipse cx="597.4" cy="415.8" rx="12.9" ry="12.9" fill="#8d9496" stroke="#c98080" stroke-width="1.6"/><path d="M577.9 261.5 C598.5 260.1 620.5 265.6 635.3 271.6 C650.1 277.6 658.8 286.9 666.9 297.4 C675.0 307.9 680.6 320.4 684.0 334.8 C687.4 349.2 687.9 368.8 687.0 383.6 C686.1 398.4 686.1 414.2 678.4 423.8 C670.7 433.4 656.8 437.6 641.0 441.0 C625.2 444.4 602.8 443.9 583.6 443.9 C564.4 443.9 542.8 443.9 526.0 441.0 C509.2 438.1 492.6 433.4 483.0 426.7 C473.4 420.0 471.3 412.8 468.7 400.8 C466.1 388.8 464.4 371.2 467.3 354.9 C470.2 338.6 478.6 315.6 486.0 303.2 C493.4 290.8 496.5 287.1 511.8 280.2 C527.1 273.2 557.3 262.9 577.9 261.5Z" fill="none" stroke="#000" stroke-width="30" opacity="0.75" filter="url(#cedge)" transform="translate(5 -3)"/><rect x="440" y="240" width="280" height="230" fill="url(#cdir)"/></g></g></g></svg>
<div style="left:993px;top:55px;width:200px;height:297px;background:#1a1a1e;"></div>
<div style="left:1000px;top:60px;width:188px;height:285px;background:#5c5c5c;"></div>
<div style="left:1002px;top:63.5px;width:185px;height:24.5px;background:#808080;"></div>
<div style="left:1002px;top:87.5px;width:185px;height:1.8px;background:#585858;"></div>
<div style="left:1004.5px;top:69.22px;font-size:12.5px;line-height:12.5px;color:#1e1e1e;white-space:nowrap;-webkit-text-stroke:0.3px currentColor;">Click to create layer 10</div>
<div style="left:1002px;top:89px;width:185px;height:27px;background:#808080;"></div>
<div style="left:1002px;top:115.5px;width:185px;height:1.8px;background:#585858;"></div>
<div style="left:1004.5px;top:97.22px;font-size:12.5px;line-height:12.5px;color:#1e1e1e;white-space:nowrap;-webkit-text-stroke:0.3px currentColor;">Click to create layer 9</div>
<div style="left:1002px;top:117px;width:185px;height:27px;background:#808080;"></div>
<div style="left:1002px;top:143.5px;width:185px;height:1.8px;background:#585858;"></div>
<div style="left:1004.5px;top:125.22px;font-size:12.5px;line-height:12.5px;color:#1e1e1e;white-space:nowrap;-webkit-text-stroke:0.3px currentColor;">Click to create layer 8</div>
<div style="left:1002px;top:145px;width:185px;height:27px;background:#808080;"></div>
<div style="left:1002px;top:171.5px;width:185px;height:1.8px;background:#585858;"></div>
<div style="left:1004.5px;top:153.22px;font-size:12.5px;line-height:12.5px;color:#1e1e1e;white-space:nowrap;-webkit-text-stroke:0.3px currentColor;">Click to create layer 7</div>
<div style="left:1002px;top:173px;width:185px;height:27px;background:#808080;"></div>
<div style="left:1002px;top:199.5px;width:185px;height:1.8px;background:#585858;"></div>
<div style="left:1004.5px;top:181.22px;font-size:12.5px;line-height:12.5px;color:#1e1e1e;white-space:nowrap;-webkit-text-stroke:0.3px currentColor;">Click to create layer 6</div>
<div style="left:1002px;top:201px;width:185px;height:27px;background:#808080;"></div>
<div style="left:1002px;top:227.5px;width:185px;height:1.8px;background:#585858;"></div>
<div style="left:1004.5px;top:209.22px;font-size:12.5px;line-height:12.5px;color:#1e1e1e;white-space:nowrap;-webkit-text-stroke:0.3px currentColor;">Click to create layer 5</div>
<div style="left:1002px;top:229px;width:185px;height:27px;background:#808080;"></div>
<div style="left:1002px;top:255.5px;width:185px;height:1.8px;background:#585858;"></div>
<div style="left:1004.5px;top:237.22px;font-size:12.5px;line-height:12.5px;color:#1e1e1e;white-space:nowrap;-webkit-text-stroke:0.3px currentColor;">Click to create layer 4</div>
<div style="left:1002px;top:257px;width:185px;height:27px;background:#808080;"></div>
<div style="left:1002px;top:283.5px;width:185px;height:1.8px;background:#585858;"></div>
<div style="left:1004.5px;top:265.22px;font-size:12.5px;line-height:12.5px;color:#1e1e1e;white-space:nowrap;-webkit-text-stroke:0.3px currentColor;">Click to create layer 3</div>
<div style="left:1002px;top:284.5px;width:185px;height:27.5px;background:#000;"></div>
<svg style="left:1005px;top:289px" width="18" height="19" viewBox="0 0 18 19"><rect width="18" height="19" fill="#d4d4d4"/><path d="M1.5 9.5 C4 5 14 5 16.5 9.5 C14 14 4 14 1.5 9.5Z" fill="#fff" stroke="#111" stroke-width="1.6"/><circle cx="9" cy="9.3" r="3.2" fill="#111"/><circle cx="10" cy="8.3" r="1" fill="#eee"/><path d="M2 6.5 C6 3 12 3 16 6.5" stroke="#333" stroke-width="1" fill="none"/></svg>
<svg style="left:1030px;top:289px" width="18" height="19" viewBox="0 0 18 19"><rect width="18" height="19" fill="#d4d4d4"/><path d="M4.5 17 L4.5 4 C4.5 2.5 13.5 2.5 13.5 4 L13.5 9" stroke="#000" stroke-width="2.2" fill="none"/><rect x="4" y="10" width="10" height="7" fill="#000"/></svg>
<div style="left:1053px;top:285px;width:27px;height:27px;background:#808080;box-sizing:border-box;border:1px solid #b0b0b0;"></div>
<svg style="left:1053px;top:285px" width="27" height="27" viewBox="0 0 27 27"><defs><filter color-interpolation-filters="sRGB" id="lt"><feGaussianBlur stdDeviation="1"/></filter></defs><g filter="url(#lt)"><ellipse cx="14" cy="11" rx="4.5" ry="3.5" fill="#e83838"/><rect x="12.5" y="13" width="3" height="7" fill="#9a6060"/></g></svg>
<div style="left:1083.5px;top:293.62px;font-size:12.5px;line-height:12.5px;color:#e0e0e0;white-space:nowrap;-webkit-text-stroke:0.3px currentColor;">layer2</div>
<div style="left:1002px;top:312px;width:185px;height:28px;background:#808080;"></div>
<svg style="left:1005px;top:317px" width="18" height="19" viewBox="0 0 18 19"><rect width="18" height="19" fill="#d4d4d4"/><path d="M1.5 9.5 C4 5 14 5 16.5 9.5 C14 14 4 14 1.5 9.5Z" fill="#fff" stroke="#111" stroke-width="1.6"/><circle cx="9" cy="9.3" r="3.2" fill="#111"/><circle cx="10" cy="8.3" r="1" fill="#eee"/><path d="M2 6.5 C6 3 12 3 16 6.5" stroke="#333" stroke-width="1" fill="none"/></svg>
<svg style="left:1030px;top:317px" width="18" height="19" viewBox="0 0 18 19"><rect width="18" height="19" fill="#d4d4d4"/><path d="M5 10 L5 6.5 C5 4 13 4 13 6.5 L13 10" stroke="#111" stroke-width="1.6" fill="none"/><rect x="4.3" y="9.5" width="9.4" height="6.5" fill="#fff" stroke="#111" stroke-width="1.6"/></svg>
<div style="left:1053px;top:313px;width:27px;height:27px;background:#fff;box-sizing:border-box;border:1px solid #444;"></div>
<div style="left:1084.5px;top:320.79px;font-size:12.3px;line-height:12.3px;color:#1e1e1e;white-space:nowrap;-webkit-text-stroke:0.3px currentColor;">background</div>
<div style="left:997px;top:58px;width:186px;height:281px;border:4.5px solid #8e0606;border-radius:9px;"></div>
<div style="left:997px;top:361px;width:193px;height:29px;background:#3c3c3c;"></div>
<div style="left:999px;top:365px;width:48px;height:22px;background:#c81000;"></div>
<div style="left:1047px;top:365px;width:46px;height:22px;background:#007000;box-sizing:border-box;border:2px solid #c8c8c8;outline:1px solid #000;outline-offset:-3px;"></div>
<div style="left:1093px;top:365px;width:47px;height:22px;background:#0000ff;"></div>
<div style="left:1140px;top:365px;width:46px;height:22px;background:#ffffff;"></div>
<div style="left:997px;top:394px;width:193px;height:79px;background:#3c3c3c;"></div>
<div style="left:1000px;top:418px;width:186px;height:30px;background:#4c4c4c;"></div>
<div style="left:1000px;top:398px;width:186px;height:21px;background:linear-gradient(to right,#107010,#ff7000);"></div>
<div style="left:1000px;top:423px;width:186px;height:22px;background:linear-gradient(to right,#000000,#00ff00);"></div>
<div style="left:1000px;top:448px;width:186px;height:23px;background:linear-gradient(to right,#0a7030,#0070ff);"></div>
<div style="left:1005.5px;top:405.39px;font-size:12.3px;line-height:12.3px;color:#c8f0b0;white-space:nowrap;-webkit-text-stroke:0.3px currentColor;">Red: 0</div>
<div style="left:1005.5px;top:431.10px;font-size:12.4px;line-height:12.4px;color:#d0d0d0;white-space:nowrap;-webkit-text-stroke:0.3px currentColor;">Green: 110</div>
<div style="left:1005.5px;top:456.50px;font-size:12.4px;line-height:12.4px;color:#c8f0b0;white-space:nowrap;-webkit-text-stroke:0.3px currentColor;">Blue: 0</div>
<div style="left:997px;top:477px;width:193px;height:79px;background:#3c3c3c;"></div>
<div style="left:999px;top:480px;width:187px;height:22px;background:linear-gradient(to right,#ff0000,#ffff00 16.6%,#00ff00 33.3%,#00ffff 50%,#0000ff 66.6%,#ff00ff 83.3%,#ff0000);"></div>
<div style="left:1000px;top:505px;width:186px;height:22px;background:#1f581f;"></div>
<div style="left:999px;top:530px;width:187px;height:22px;background:linear-gradient(to right,#000000,#00ff00 50%,#ffffff);"></div>
<div style="left:1005.5px;top:489.59px;font-size:12.3px;line-height:12.3px;color:rgba(0,0,0,0.75);white-space:nowrap;-webkit-text-stroke:0.3px currentColor;">Hue: 120</div>
<div style="left:1005.5px;top:514.02px;font-size:12.5px;line-height:12.5px;color:#d0d0d0;white-space:nowrap;-webkit-text-stroke:0.3px currentColor;">Sat: 100%</div>
<div style="left:1005.5px;top:539.50px;font-size:12.4px;line-height:12.4px;color:#d8f0c8;white-space:nowrap;-webkit-text-stroke:0.3px currentColor;">Lum: 22%</div>
<div style="left:1002px;top:398px;width:3px;height:7px;background:#000;border:1px solid rgba(200,240,190,0.8);border-radius:1.5px 1.5px 0 0;"></div>
<div style="left:1081px;top:423px;width:3px;height:7px;background:#000;border:1px solid rgba(200,240,190,0.8);border-radius:1.5px 1.5px 0 0;"></div>
<div style="left:1002px;top:448px;width:3px;height:7px;background:#000;border:1px solid rgba(200,240,190,0.8);border-radius:1.5px 1.5px 0 0;"></div>
<div style="left:1063px;top:481px;width:3px;height:7px;background:#000;border:1px solid rgba(200,240,190,0.8);border-radius:1.5px 1.5px 0 0;"></div>
<div style="left:1182px;top:506px;width:3px;height:7px;background:#000;border:1px solid rgba(200,240,190,0.8);border-radius:1.5px 1.5px 0 0;"></div>
<div style="left:1042px;top:531px;width:3px;height:7px;background:#000;border:1px solid rgba(200,240,190,0.8);border-radius:1.5px 1.5px 0 0;"></div>
<div style="left:997px;top:560px;width:193px;height:195px;background:#3c3c3c;"></div>
<div style="left:1000px;top:563px;width:186px;height:187px;background:#000;"></div>
<div style="left:1001px;top:563px;width:22px;height:23px;background:#007000;"></div>
<div style="left:1024px;top:563px;width:22px;height:23px;background:#007000;"></div>
<div style="left:1047px;top:563px;width:22px;height:23px;background:#c81000;"></div>
<div style="left:1071px;top:563px;width:22px;height:23px;background:#500800;"></div>
<div style="left:1094px;top:563px;width:22px;height:23px;background:#c82020;"></div>
<div style="left:1117px;top:563px;width:22px;height:23px;background:#ffffff;"></div>
<div style="left:1140px;top:563px;width:22px;height:23px;background:#e0c0c0;"></div>
<div style="left:1163px;top:563px;width:22px;height:23px;background:#d8a8a0;"></div>
<div style="left:1001px;top:587px;width:22px;height:22px;background:#e01000;"></div>
<div style="left:1024px;top:587px;width:22px;height:22px;background:#ffd080;"></div>
<div style="left:1047px;top:587px;width:22px;height:22px;background:#ffd080;"></div>
<div style="left:1071px;top:587px;width:22px;height:22px;background:#ff0000;"></div>
<div style="left:1001px;top:656px;width:12px;height:22px;background:#f8d080;"></div>
<div style="left:1013px;top:656px;width:12px;height:22px;background:#00ff00;"></div>
<div style="left:1024px;top:656px;width:12px;height:22px;background:#0000ff;"></div>
<div style="left:1035px;top:656px;width:12px;height:22px;background:#ffffff;"></div>
<div style="left:1047px;top:656px;width:12px;height:22px;background:#ff0000;"></div>
<div style="left:1059px;top:656px;width:12px;height:22px;background:#00ff00;"></div>
<div style="left:1070px;top:656px;width:12px;height:22px;background:#0000ff;"></div>
<div style="left:1081px;top:656px;width:12px;height:22px;background:#ffffff;"></div>
<div style="left:1093px;top:656px;width:93px;height:93px;background:linear-gradient(to right,#ffffff,#0010ff);"></div>
<div style="left:1093px;top:656px;width:93px;height:93px;background:linear-gradient(to right,#f0d870,#30f020);-webkit-mask-image:linear-gradient(to bottom,#000,rgba(0,0,0,0.55) 50%,rgba(0,0,0,0));mask-image:linear-gradient(to bottom,#000,rgba(0,0,0,0.55) 50%,rgba(0,0,0,0));"></div>
<svg style="left:900px;top:190px" width="120" height="100" viewBox="900 190 120 100">
<path d="M926 267 L990 226" stroke="#b00010" stroke-width="4" stroke-linecap="round"/>
<path d="M1001 216 L981 221 L992 233 Z" fill="#b00010"/>
</svg>
</body></html>
